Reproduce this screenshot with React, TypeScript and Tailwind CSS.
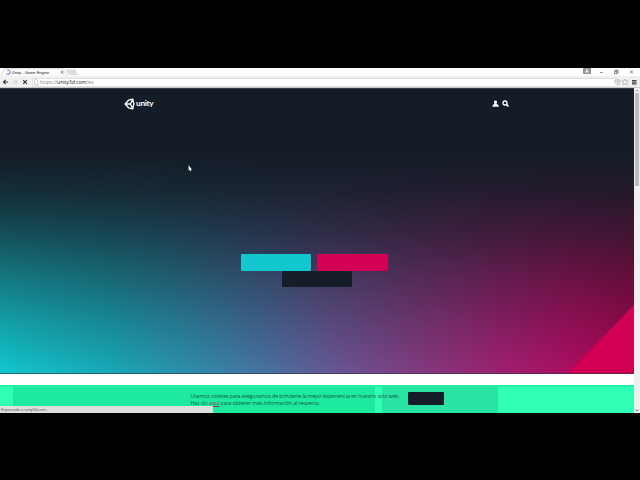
import React from "react";

const ui = "font-['Open_Sans','Noto_Sans',sans-serif]";

function TabStrip() {
  return (
    <div className="flex h-[8px] items-stretch bg-white">
      <svg width="80" height="8" viewBox="0 0 80 8" className="absolute">
        <path d="M1 8L4 .7H63L67 8" fill="#fbfbfb" stroke="#c4c4c4" strokeWidth=".6" />
        <path d="M66 1.8H75L78 7H69Z" fill="#dedede" stroke="#d0d0d0" strokeWidth=".4" />
        <path d="M7.2 2.2A2.2 2.2 0 1 1 6.2 5.5" fill="none" stroke="#4c79bd" strokeWidth="1" />
        <path d="M60.8 2.8L63.5 5.6M63.5 2.8L60.8 5.6" stroke="#555" strokeWidth=".7" />
      </svg>
      <span className="relative ml-[12px] mt-[0.5px] w-[48px] whitespace-nowrap font-['Liberation_Sans',sans-serif] text-[4px] leading-[8px] text-[#222]">
        Unity - Game Engine
      </span>
      <svg width="60" height="8" viewBox="0 0 60 8" className="ml-auto">
        <path d="M3 0H11V6H3Z" fill="#949494" />
        <path d="M5 4.5C5 3 6 3.3 6.3 2.8A1 1 0 1 1 7.7 2.8C8 3.3 9 3 9 4.5Z" fill="#e5e5e5" />
        <path d="M20 4.5H23" stroke="#666" strokeWidth=".7" />
        <path d="M34.5 3.2H37V5.7H34.5ZM35.4 3V2.2H38V5H37.2" fill="none" stroke="#333" strokeWidth=".6" />
        <path d="M50 2.5L53 5.5M53 2.5L50 5.5" stroke="#555" strokeWidth=".7" />
      </svg>
    </div>
  );
}

function Toolbar() {
  return (
    <div className="flex h-[12px] items-center border-b border-[#c9c9c9] bg-[#f0f0f0]">
      <svg width="32" height="11" viewBox="0 0 32 11" className="shrink-0">
        <path d="M8 6H3.5M5.7 3.8L3.5 6L5.7 8.2" fill="none" stroke="#333" strokeWidth="1.1" />
        <path d="M13 6H17.5M15.3 3.8L17.5 6L15.3 8.2" fill="none" stroke="#ccc" strokeWidth="1" />
        <path d="M23.2 4.2L26.8 7.8M26.8 4.2L23.2 7.8" stroke="#333" strokeWidth="1.2" />
      </svg>
      <div className="mt-px flex h-[9px] grow items-center border border-[#e0e0e0] bg-white">
        <svg width="7" height="8" viewBox="0 0 7 8">
          <path d="M1.7 1.5H3.6L5 3V7H1.7Z" fill="none" stroke="#aaa" strokeWidth=".6" />
        </svg>
        <span className="text-[5.3px] leading-[8px] tracking-[-0.13px] text-[#888]">
          https://<span className="text-[#222]">unity3d.com</span>/es
        </span>
      </div>
      <svg width="30" height="11" viewBox="0 0 30 11" className="-ml-[8px] shrink-0">
        <path d="M5 4H10V6C10 9 5 9 5 6ZM6.3 5.3L7.5 6.5L8.7 5.3" fill="none" stroke="#aaa" strokeWidth=".8" />
        <path d="M15 3L15.9 5H18L16.4 6.4L17 8.6L15 7.5L13 8.6L13.6 6.4L12 5H14.1Z" fill="#fff" stroke="#999" strokeWidth=".6" />
        <path d="M22 4.5H26.5M22 6.2H26.5M22 7.9H26.5" stroke="#444" strokeWidth="1.2" />
      </svg>
    </div>
  );
}

function Logo() {
  return (
    <div className="flex h-[13px] items-center text-white">
      <svg width="11" height="12" viewBox="0 0 11 12">
        <path
          d="M4.6 2.2L8.8 1.1L9.9 5.9L8.8 10.9L4.6 9.8L1.1 6ZM1.3 6H6.4M6.4 6L8.8 1.6M6.4 6L8.8 10.4"
          fill="none"
          stroke="white"
          strokeWidth="1.35"
          strokeLinejoin="round"
        />
      </svg>
      <span className="ml-px -mt-px font-['Lato',sans-serif] text-[8.3px] font-bold leading-[12px] tracking-[-0.3px]">
        unity
      </span>
    </div>
  );
}

function Hero() {
  return (
    <section className="relative h-[286px] overflow-hidden bg-[linear-gradient(82deg,#10c9cf_0%,#14c0c8_4%,#18a8b6_17%,#2f8cab_29%,#4a70a1_40%,#685693_50%,#823b80_62%,#a01f70_75%,#b00b60_86%,#a60049_98%)]">
      <div className="absolute inset-0 bg-[linear-gradient(to_bottom,#141c27_0%,#141c27_23%,#141c27e4_36%,#141c27b4_50%,#141c2774_66%,#141c2736_83%,#141c2700_100%)]" />
      <div className="absolute bottom-0 right-0 h-[69px] w-[67px] bg-[#d10052] [clip-path:polygon(100%_0,100%_100%,0_100%)]" />
      <div className="absolute inset-x-0 bottom-0 h-px bg-[#24304a]/60" />
      <div className="absolute inset-x-0 top-0 h-px bg-[#4b5058]/60" />
      <header className="relative flex justify-between pl-[124px] pr-[124px] pt-[9px]">
        <Logo />
        <svg width="18" height="13" viewBox="0 -.6 18 13">
          <path
            d="M.6 9.1V8C.6 7 1.8 7 2.6 6.5C1.6 5 1.6 3 3.5 3S5.4 5 4.4 6.5C5.2 7 6.6 7 6.6 8V9.1Z"
            fill="white"
          />
          <circle cx="13" cy="5.4" r="2" fill="none" stroke="white" strokeWidth="1.3" />
          <path d="M14.4 6.8L16.5 8.9" stroke="white" strokeWidth="1.6" />
        </svg>
      </header>
      <div className="relative mt-[144px] flex gap-[6px] pl-[241px]">
        <div className="h-[17px] w-[70px] rounded-[1px] bg-[#12c7ce]" />
        <div className="h-[17px] w-[71px] rounded-[1px] bg-[#d40055]" />
      </div>
      <div className="relative ml-[282px] h-[16px] w-[70px] rounded-[1px] bg-[#141d28]" />
      <svg width="5" height="8" viewBox="0 0 5 8" className="absolute left-[188px] top-[77px]">
        <path d="M.6 .3V5.8L1.8 4.8L2.6 6.4L3.3 6L2.6 4.5H4Z" fill="white" />
      </svg>
    </section>
  );
}

function CookieSection() {
  return (
    <section className="relative h-[28px] overflow-hidden bg-[#30ffb5]">
      <div className="flex gap-[7px] border-t-2 border-[#24efa7] pl-[13px]">
        <div className="h-[26px] w-[362px] bg-[#1dea9f]" />
        <div className="h-[26px] w-[116px] bg-[#29e4a3]" />
      </div>
      <div className="absolute inset-0 flex pl-[190.5px]">
        <p className="w-[217.5px] whitespace-nowrap pt-[7.5px] text-[5.3px] leading-[7.4px] tracking-[-0.14px] text-[#13594b]">
          Usamos cookies para asegurarnos de brindarte la mejor experiencia en nuestro sitio web.
          <br />
          Haz clic <a className="text-[#8d4150] underline">aquí</a> para obtener más información al respecto.
        </p>
        <div className="mt-[7px] h-[13px] w-[36px] rounded-[1px] bg-[#141d28]" />
      </div>
      <div className="absolute bottom-0 left-0 h-[7px] w-[213px] bg-[#dedede] pl-px font-['Liberation_Sans',sans-serif] text-[4px] leading-[7px] tracking-[-0.04px] text-[#666]">
        Esperando a unity3d.com...
      </div>
    </section>
  );
}

export default function App() {
  return (
    <div className={`h-[480px] w-[640px] overflow-hidden bg-black pt-[68px] ${ui}`}>
      <TabStrip />
      <Toolbar />
      <main className="flex h-[325px]">
        <div className="w-[634px] bg-white">
          <Hero />
          <div className="h-[11px] bg-white" />
          <CookieSection />
        </div>
        <aside className="flex w-[6px] flex-col items-center bg-[#f0f0f0]">
          <svg width="6" height="5" viewBox="0 0 6 5">
            <path d="M1.5 3.5L3 2L4.5 3.5" fill="none" stroke="#777" strokeWidth=".7" />
          </svg>
          <div className="h-[93px] w-[4px] bg-[#bcbcbf]" />
          <svg width="6" height="5" viewBox="0 0 6 5" className="mt-auto">
            <path d="M1.5 1.5L3 3L4.5 1.5" fill="none" stroke="#555" strokeWidth=".8" />
          </svg>
        </aside>
      </main>
    </div>
  );
}
